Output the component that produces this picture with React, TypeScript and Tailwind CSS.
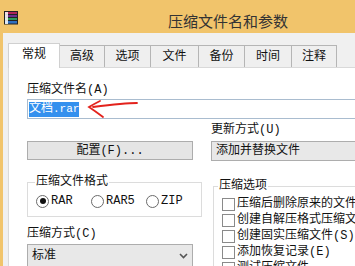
import React from "react"

const tabs = [
  { label: "常规", w: "w-[52px]" },
  { label: "高级", w: "w-[46px]" },
  { label: "选项", w: "w-[47px]" },
  { label: "文件", w: "w-[49px]" },
  { label: "备份", w: "w-[47px]" },
  { label: "时间", w: "w-[48px]" },
  { label: "注释", w: "w-[46px]" },
]

const options = ["压缩后删除原来的文件", "创建自解压格式压缩文件", "创建固实压缩文件(S)", "添加恢复记录(E)", "测试压缩文件"]

function RarIcon() {
  return (
    <svg width="16" height="16" viewBox="0 0 16 16">
      <rect x="1.5" y="1.5" width="13" height="3" fill="#b0245a" stroke="#222" />
      <rect x="1.5" y="4.5" width="13" height="3" fill="#6a2f8e" stroke="#222" />
      <rect x="1.5" y="7.5" width="13" height="3" fill="#2f9a5a" stroke="#222" />
      <rect x="1.5" y="10.5" width="13" height="3.5" fill="#2f6fc0" stroke="#222" />
      <rect x="2" y="2" width="3" height="12" fill="#fff" opacity="0.85" />
    </svg>
  )
}

function Radio({ label, checked }: { label: string; checked?: boolean }) {
  return (
    <div className="flex w-[55px] items-center">
      <span className="flex h-[13px] w-[13px] items-center justify-center rounded-full border border-[#6b6b6b] bg-white">
        {checked && <span className="h-[6px] w-[6px] rounded-full bg-[#111]" />}
      </span>
      <span className="ml-[2px]">{label}</span>
    </div>
  )
}

export default function App() {
  return (
    <div
      className="h-[266px] w-[355px] overflow-hidden bg-[#f1c46b] text-[12px] leading-[14px] text-[#111]"
      style={{ fontFamily: '"Liberation Mono", "Noto Sans CJK SC", monospace' }}
    >
      <div className="w-[456px]">
        <div className="grid h-[33px] grid-cols-[1fr_auto_1fr] items-start">
          <div className="ml-[3px] mt-[10px]">
            <RarIcon />
          </div>
          <div
            className="mt-[13px] text-[15px] leading-[16px] text-[#333]"
            style={{ fontFamily: '"Noto Sans CJK SC", sans-serif' }}
          >
            压缩文件名和参数
          </div>
          <div />
        </div>

        <div className="ml-[3px] bg-[#f0f0f0] pl-[5px] pt-[10px]">
          <div className="flex h-[24px] items-end">
            {tabs.map((t, i) =>
              i === 0 ? (
                <div
                  key={t.label}
                  className={`relative z-10 -mb-px flex h-[25px] items-center justify-center border-x border-t border-[#d0d0d0] bg-white pb-[2px] ${t.w}`}
                >
                  {t.label}
                </div>
              ) : (
                <div
                  key={t.label}
                  className={`-ml-px flex h-[22px] items-center justify-center border-x border-t border-[#b5b5b5] bg-[#efefef] ${t.w}`}
                >
                  {t.label}
                </div>
              )
            )}
          </div>

          <div className="h-[220px] border-l border-t border-[#d9d9d9] bg-white pl-[18px] pt-[15px]">
            <div>压缩文件名(A)</div>
            <div className="relative mt-[2px] flex h-[20px] items-center border border-[#a9bccf] pl-[1px]">
              <span className="bg-[#3390ee] leading-[15px] text-white">
                文档<span className="text-[11px]">.rar</span>
              </span>
              <svg
                className="absolute left-[59px] top-[-3px]"
                width="54"
                height="24"
                viewBox="0 0 54 24"
                fill="none"
                stroke="#e3221c"
                strokeWidth="1.8"
                strokeLinecap="round"
              >
                <path d="M50 6 C38 6 22 8 6 10" />
                <path d="M13 4 Q7 7 2 10 Q8 14 16 20" />
              </svg>
            </div>

            <div className="mt-[4px] flex gap-[18px]">
              <div className="w-[166px]">
                <div className="mt-[18px] flex h-[19px] items-center justify-center border border-[#adadad] bg-[#e5e5e5]">
                  配置(F)...
                </div>
                <fieldset className="mt-[15px] border border-[#dcdcdc] pb-[8px] pl-[8px] pt-[5px]">
                  <legend className="ml-[-1px] px-[1px]">压缩文件格式</legend>
                  <div className="flex">
                    <Radio label="RAR" checked />
                    <Radio label="RAR5" />
                    <Radio label="ZIP" />
                  </div>
                </fieldset>
                <div className="mt-[10px]">压缩方式(C)</div>
                <div className="mt-[3px] flex h-[24px] items-center justify-between border border-[#adadad] bg-[#e8e8e8] pl-[4px] pr-[4px]">
                  <span>标准</span>
                  <svg width="9" height="6" viewBox="0 0 9 6" fill="none" stroke="#555" strokeWidth="1.6">
                    <path d="M1 1 L4.5 4.5 L8 1" />
                  </svg>
                </div>
              </div>

              <div className="w-[245px]">
                <div>更新方式(U)</div>
                <div className="mt-[4px] flex h-[20px] items-center border border-[#adadad] bg-[#e8e8e8] pl-[4px]">
                  添加并替换文件
                </div>
                <fieldset className="ml-[2px] mt-[18px] border border-[#dcdcdc] pl-[8px] pt-[3px]">
                  <legend className="ml-[-4px] px-[1px]">压缩选项</legend>
                  {options.map((o) => (
                    <div key={o} className="flex h-[16px] items-center whitespace-nowrap">
                      <span className="h-[13px] w-[13px] shrink-0 border border-[#8a8a8a] bg-white" />
                      <span className="ml-[2px]">{o}</span>
                    </div>
                  ))}
                </fieldset>
              </div>
            </div>
          </div>
        </div>
      </div>
    </div>
  )
}
